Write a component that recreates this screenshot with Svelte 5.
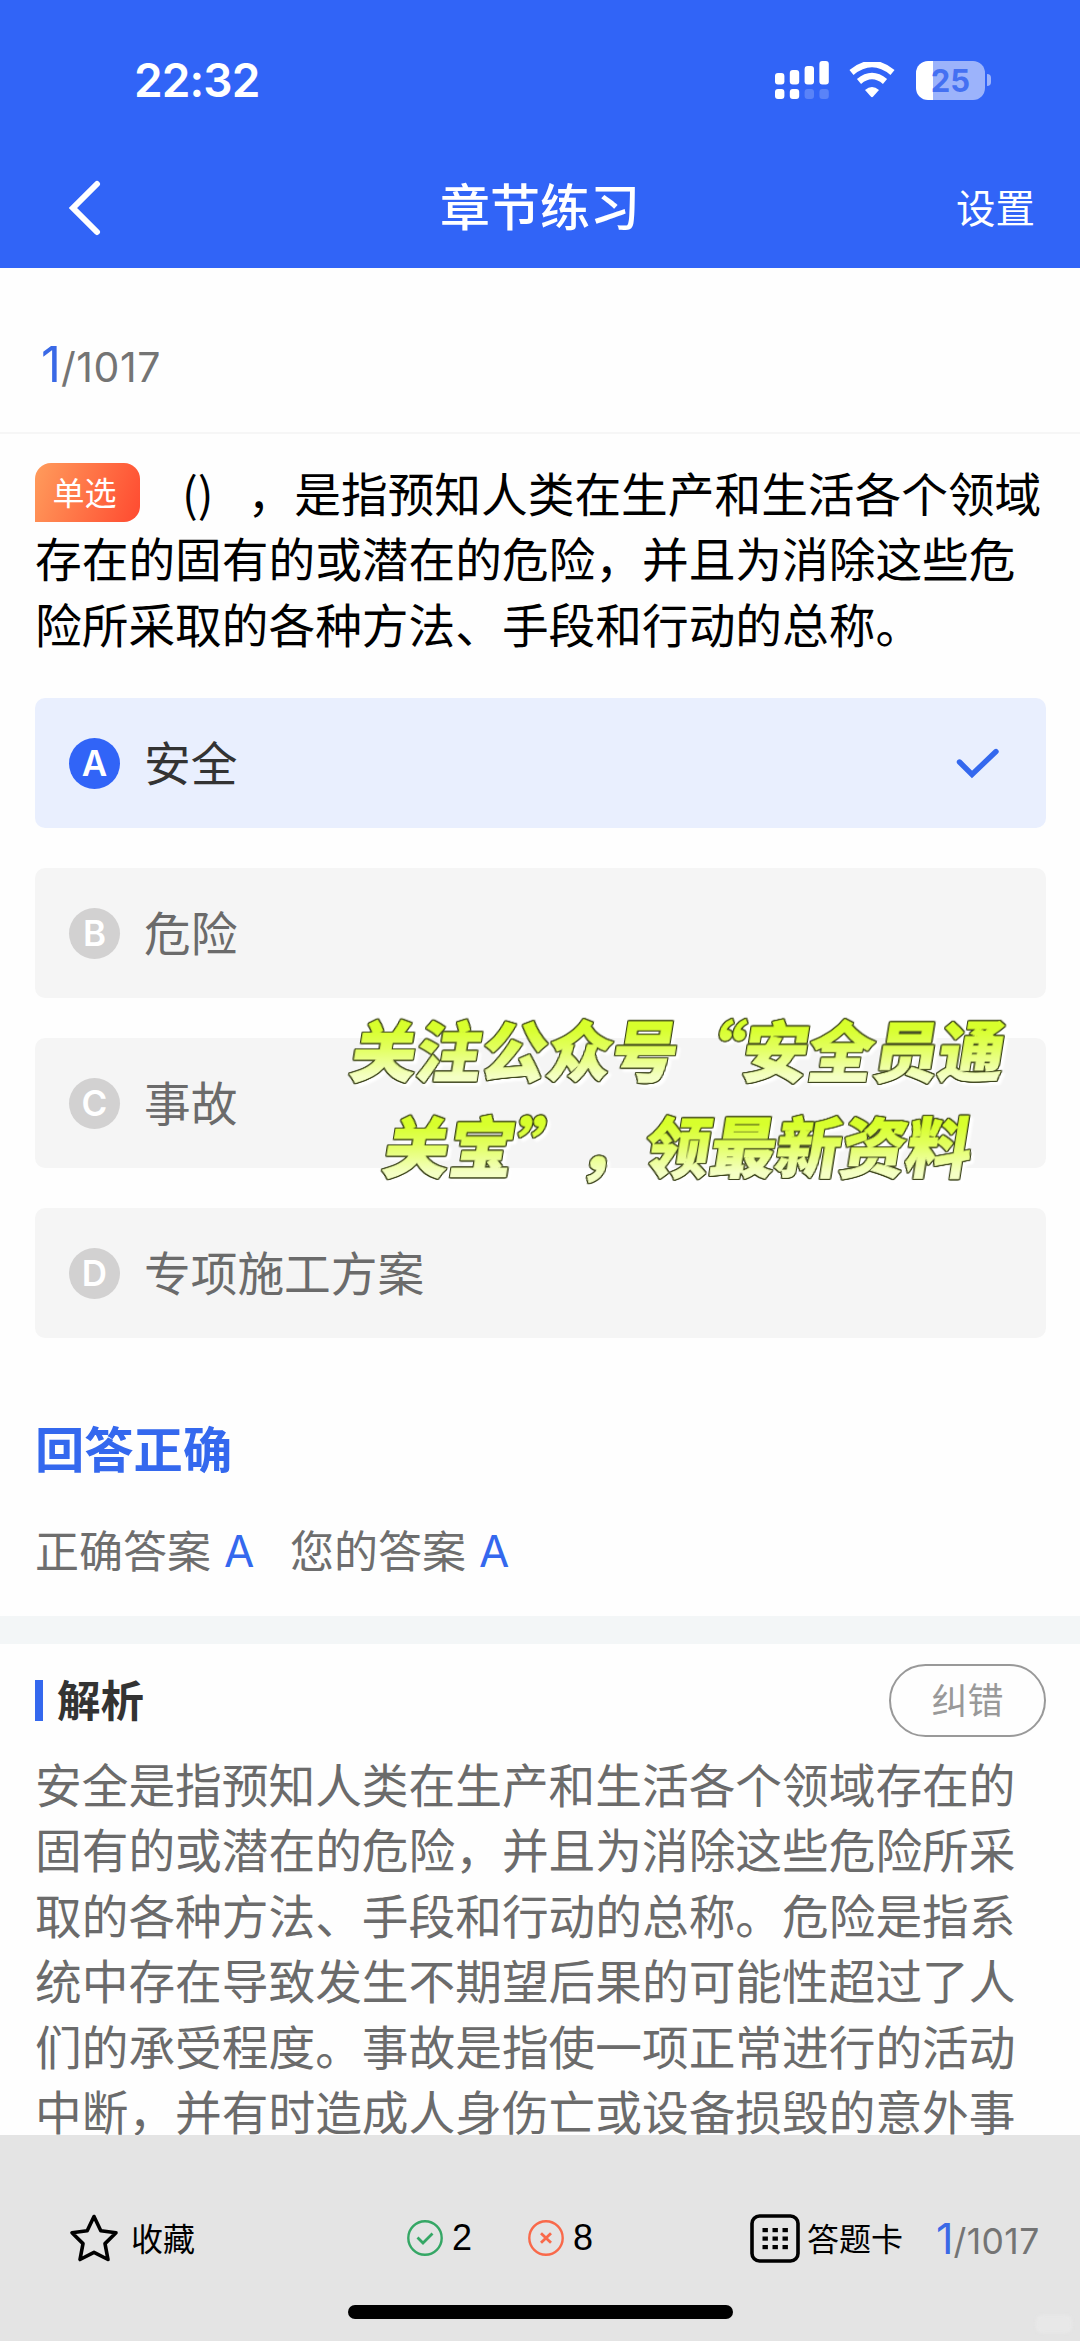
<script>
  let current = 1;
  let total = 1017;
  let selected = 'A';

  const question = '，是指预知人类在生产和生活各个领域存在的固有的或潜在的危险，并且为消除这些危险所采取的各种方法、手段和行动的总称。';
  const options = [
    { key: 'A', text: '安全' },
    { key: 'B', text: '危险' },
    { key: 'C', text: '事故' },
    { key: 'D', text: '专项施工方案' }
  ];
  const analysis = '安全是指预知人类在生产和生活各个领域存在的固有的或潜在的危险，并且为消除这些危险所采取的各种方法、手段和行动的总称。危险是指系统中存在导致发生不期望后果的可能性超过了人们的承受程度。事故是指使一项正常进行的活动中断，并有时造成人身伤亡或设备损毁的意外事';
  const promo = ['关注公众号“安全员通', '关宝”，领最新资料'];
</script>

<div class="screen">
  <header>
    <div class="status">
      <span class="time">22:32</span>
      <svg class="signal" width="54" height="38" viewBox="0 0 54 38" fill="#fff">
        <rect x="0" y="12" width="9.4" height="11.5" rx="3" />
        <rect x="14.8" y="9" width="9.4" height="14.5" rx="3" />
        <rect x="29.6" y="5" width="9.4" height="18.5" rx="3" />
        <rect x="44.4" y="0" width="9.4" height="23.5" rx="3" />
        <rect x="0" y="28" width="9.4" height="10" rx="3" />
        <rect x="14.8" y="28" width="9.4" height="10" rx="3" />
        <rect x="29.6" y="28" width="9.4" height="10" rx="3" opacity="0.2" />
        <rect x="44.4" y="28" width="9.4" height="10" rx="3" opacity="0.2" />
      </svg>
      <svg class="wifi" width="46" height="36" viewBox="0 0 46 36">
        <path d="M2.5 10.5 Q23 -6.5 43.5 10.5" fill="none" stroke="#fff" stroke-width="6.4" />
        <path d="M10 19.5 Q23 8.5 36 19.5" fill="none" stroke="#fff" stroke-width="6.4" />
        <path d="M16 28 Q23 22 30 28 L24.2 34.6 Q23 35.8 21.8 34.6 Z" fill="#fff" />
      </svg>
      <div class="battery"><span>25</span></div>
      <i class="nub"></i>
    </div>
    <nav>
      <svg class="back" width="34" height="56" viewBox="0 0 34 56">
        <path d="M29 4 L5 28 L29 52" fill="none" stroke="#fff" stroke-width="6" stroke-linecap="round" stroke-linejoin="miter" />
      </svg>
      <h1>章节练习</h1>
      <span class="setting">设置</span>
    </nav>
  </header>

  <div class="progress"><b>{current}</b><span>/{total}</span></div>

  <main>
    <p class="question"><span class="tag">单选</span><span class="blank">()</span>{question}</p>

    <div class="options">
      {#each options as option}
        <div class="option" class:active={option.key === selected}>
          <span class="key">{option.key}</span>
          <span class="text">{option.text}</span>
          {#if option.key === selected}
            <svg width="44" height="32" viewBox="0 0 44 32">
              <path d="M3.5 15 L16 27.5 L40 4.5" fill="none" stroke="#3468ee" stroke-width="5.4" stroke-linecap="round" />
            </svg>
          {/if}
        </div>
      {/each}
      <div class="promo">
        {#each promo as line}
          <div>{line}</div>
        {/each}
      </div>
    </div>

    <h2>回答正确</h2>
    <div class="answers">
      <span>正确答案</span><em>{selected}</em>
      <span>您的答案</span><em>{selected}</em>
    </div>
  </main>

  <section>
    <div class="section-head">
      <h3>解析</h3>
      <button>纠错</button>
    </div>
    <p>{analysis}</p>
  </section>

  <footer>
    <div class="toolbar">
      <svg class="star" width="50" height="50" viewBox="0 0 50 50">
        <path d="M25 3.5 L31.8 17.8 L47 19.8 L36 30.6 L39 46.5 L25 39.3 L11 46.5 L14 30.6 L3 19.8 L18.2 17.8 Z" fill="none" stroke="#000" stroke-width="3.6" stroke-linejoin="round" />
      </svg>
      <span class="collect">收藏</span>
      <svg class="right" width="36" height="36" viewBox="0 0 36 36" fill="none" stroke="#35a765">
        <circle cx="18" cy="18" r="16.7" stroke-width="2.4" />
        <path d="M10.5 17.5 L16 23 L25.5 13.5" stroke-width="2.8" />
      </svg>
      <span class="count">2</span>
      <svg class="wrong" width="36" height="36" viewBox="0 0 36 36" fill="none" stroke="#f9694a">
        <circle cx="18" cy="18" r="16.7" stroke-width="2.4" />
        <path d="M13 13.2 L23 22.8 M23 13.2 L13 22.8" stroke-width="2.8" />
      </svg>
      <span class="count">8</span>
      <svg class="card" width="50" height="49" viewBox="0 0 50 49">
        <rect x="2" y="2" width="46" height="45" rx="7.5" fill="none" stroke="#000" stroke-width="3.6" />
        {#each [12.5, 22.5, 32.5] as x}
          {#each [14, 22.5, 31] as y}
            <rect {x} {y} width="5.4" height="4.2" />
          {/each}
        {/each}
      </svg>
      <span class="sheet">答题卡</span>
      <span class="pages"><b>{current}</b><span>/{total}</span></span>
    </div>
    <i class="home"></i>
    <i class="mark"></i>
  </footer>
</div>

<style>
  :global(body) {
    margin: 0;
    background: #fff;
  }

  .screen {
    width: 1080px;
    height: 2341px;
    overflow: hidden;
    display: flex;
    flex-direction: column;
    background: #fefefe;
    color: #000;
    font-family: 'Noto Sans CJK SC', sans-serif;
    text-spacing-trim: space-all;
  }

  h1, h2, h3, p {
    margin: 0;
  }

  header {
    height: 268px;
    flex: none;
    background: #3164f7;
    color: #fff;
  }

  .status {
    height: 160px;
    display: flex;
    align-items: center;
    padding-left: 134px;
  }

  .time {
    width: 641px;
    font: 600 46px Inter, sans-serif;
    letter-spacing: -0.9px;
  }

  .wifi {
    margin-left: 20px;
  }

  .battery {
    width: 69px;
    height: 39px;
    margin-left: 21px;
    border-radius: 12px;
    background: linear-gradient(90deg, #fff 17px, #9cb3fb 17px);
    color: #4470f2;
    font: 700 31px/39px Inter, sans-serif;
    text-align: center;
  }

  .nub {
    width: 4px;
    height: 12px;
    margin-left: 2px;
    border-radius: 0 5px 5px 0;
    background: #9cb3fb;
  }

  nav {
    height: 96px;
    display: grid;
    grid-template-columns: 1fr auto 1fr;
    align-items: center;
    padding: 0 45px 0 68px;
  }

  h1 {
    margin-left: -23px;
    padding-bottom: 8px;
    font-size: 50px;
    font-weight: 500;
    line-height: 60px;
  }

  .setting {
    justify-self: end;
    padding-bottom: 4px;
    font-size: 39.5px;
    line-height: 60px;
  }

  .progress {
    height: 164px;
    flex: none;
    padding: 0 41px;
    border-bottom: 2px solid #f6f6f6;
    line-height: 193px;
    color: #747474;
    font-family: Inter, sans-serif;
  }

  .progress b, .pages b {
    color: #3a69e6;
    font-weight: 400;
  }

  .progress b {
    font-size: 49px;
  }

  .progress span {
    font-size: 41px;
    letter-spacing: 0.6px;
  }

  main {
    height: 1182px;
    flex: none;
    padding: 0 34px 0 35px;
  }

  .question {
    height: 239px;
    padding-top: 25px;
    font-size: 46.7px;
    line-height: 65.3px;
    word-break: break-all;
  }

  .tag {
    display: inline-block;
    box-sizing: border-box;
    width: 105px;
    height: 59px;
    margin: -6px 15px -6px 0;
    padding-right: 6px;
    border-radius: 16px 16px 16px 0;
    background: linear-gradient(110deg, #ff9c5c, #ff4a30);
    color: #fff;
    font-size: 32px;
    line-height: 56px;
    text-align: center;
    vertical-align: 7px;
  }

  .blank {
    margin: 0 34px 0 27px;
  }

  .options {
    position: relative;
    display: flex;
    flex-direction: column;
    gap: 40px;
  }

  .option {
    height: 130px;
    display: flex;
    align-items: center;
    padding: 0 46px 0 34px;
    border-radius: 10px;
    background: #f5f5f5;
    color: #6b6b6b;
    font-size: 46.7px;
  }

  .option.active {
    background: #e9effe;
    color: #333;
  }

  .key {
    width: 51px;
    height: 51px;
    border-radius: 50%;
    background: #d2d1d1;
    color: #fff;
    font: 600 35px/51px Inter, sans-serif;
    text-align: center;
  }

  .active .key {
    background: #3164f7;
  }

  .text {
    flex: 1;
    margin-left: 24px;
    padding-bottom: 6px;
  }

  .promo {
    position: absolute;
    left: 302px;
    top: 302px;
    width: 684px;
    text-align: center;
    white-space: nowrap;
    font-size: 65.3px;
    font-weight: 900;
    line-height: 96px;
    filter: drop-shadow(3px 3px 1px #fff);
  }

  .promo div {
    transform: skewX(-9deg);
    background: linear-gradient(#d8ff2c 30%, #e2ff5e 50%, #f4ffc4 80%);
    -webkit-background-clip: text;
    background-clip: text;
    color: transparent;
    -webkit-text-stroke: 0.8px transparent;
    filter: drop-shadow(1px 0 0 #3a4218) drop-shadow(-1px 0 0 #3a4218) drop-shadow(0 1px 0 #3a4218) drop-shadow(0 -1px 0 #3a4218);
  }

  h2 {
    margin-top: 74px;
    color: #3468ee;
    font-size: 49.3px;
    font-weight: 700;
    line-height: 70px;
  }

  .answers {
    margin-top: 32px;
    display: flex;
    color: #6e6e6e;
    font-size: 44px;
    line-height: 70px;
  }

  .answers em {
    width: 30px;
    margin: 0 36px 0 13px;
    padding-top: 2px;
    color: #3468ee;
    font-family: Inter, sans-serif;
    font-style: normal;
  }

  section {
    height: 519px;
    flex: none;
    box-sizing: border-box;
    overflow: hidden;
    padding: 20px 34px 0 35px;
    border-top: 28px solid #f3f6f7;
  }

  .section-head {
    display: flex;
    align-items: center;
    justify-content: space-between;
    height: 73px;
  }

  h3 {
    height: 41px;
    padding-left: 14px;
    border-left: 8px solid #3468ee;
    color: #333;
    font-size: 43.5px;
    font-weight: 700;
    line-height: 37px;
  }

  button {
    width: 157px;
    height: 73px;
    padding: 0 0 5px;
    border: 2.5px solid #999;
    border-radius: 37px;
    background: none;
    color: #999;
    font: 36px 'Noto Sans CJK SC', sans-serif;
  }

  section p {
    margin-top: 13px;
    color: #6b6b6b;
    font-size: 46.7px;
    line-height: 65.4px;
    word-break: break-all;
  }

  footer {
    position: relative;
    flex: 1;
    background: #e4e4e4;
    font-size: 32px;
  }

  .toolbar {
    display: flex;
    align-items: center;
    height: 206px;
    padding-left: 69px;
  }

  .collect {
    width: 64px;
    margin-left: 12px;
    padding-bottom: 3px;
  }

  .right {
    margin-left: 212px;
  }

  .count {
    width: 20px;
    margin-left: 9px;
    font: 36px 'Liberation Sans', sans-serif;
  }

  .wrong {
    margin-left: 56px;
  }

  .card {
    margin-left: 157px;
  }

  .sheet {
    width: 96px;
    margin-left: 7px;
    padding-bottom: 3px;
  }

  .pages {
    margin-left: 33px;
    color: #747474;
    font-family: Inter, sans-serif;
    white-space: nowrap;
  }

  .pages b {
    font-size: 43px;
  }

  .pages span {
    font-size: 35.5px;
    letter-spacing: 0.4px;
  }

  .home {
    display: block;
    width: 385px;
    height: 14px;
    margin: -36px auto 0;
    border-radius: 7px;
    background: #000;
  }

  .mark {
    position: absolute;
    right: 8px;
    bottom: 8px;
    width: 36px;
    height: 18px;
    border-radius: 6px;
    background: #e8e8e8;
    filter: blur(1.5px);
  }
</style>
